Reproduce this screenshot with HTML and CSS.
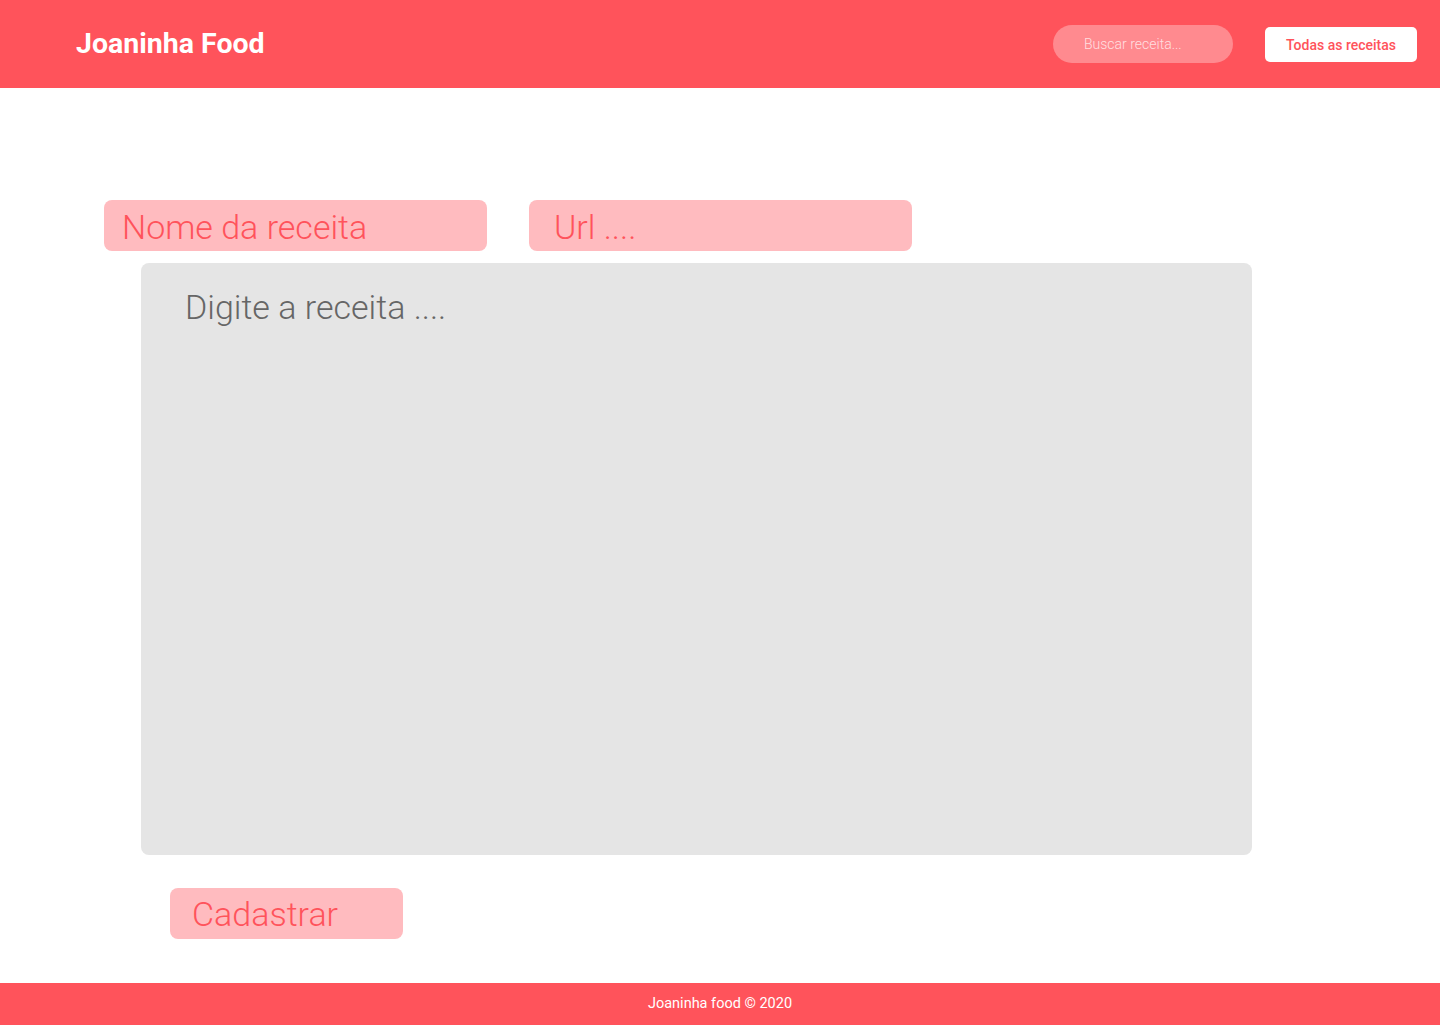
FILE: index.html
```html
<!DOCTYPE html>
<html lang="pt-BR">
<head>
<meta charset="utf-8">
<title>Joaninha Food</title>
<link rel="stylesheet" href="styles.css">
</head>
<body>
<div class="page">
  <header class="header">
    <h1 class="logo">Joaninha Food</h1>
    <div class="header-actions">
      <input class="search" type="text" placeholder="Buscar receita...">
      <button class="all-btn" type="button">Todas as receitas</button>
    </div>
  </header>
  <main class="main">
    <form class="form">
      <div class="row">
        <input class="field field-name" type="text" placeholder="Nome da receita">
        <input class="field field-url" type="text" placeholder="Url ....">
      </div>
      <textarea class="recipe" placeholder="Digite a receita ...."></textarea>
      <button class="submit" type="button">Cadastrar</button>
    </form>
  </main>
  <footer class="footer">Joaninha food © 2020</footer>
</div>
</body>
</html>
```
FILE: styles.css
```css
* { box-sizing: border-box; }
html, body { margin: 0; padding: 0; }
body {
  font-family: Roboto, "Liberation Sans", Arial, sans-serif;
  background: #fff;
}
.page {
  min-height: 1025px;
  display: flex;
  flex-direction: column;
}
.header {
  height: 88px;
  background: #ff535b;
  display: flex;
  align-items: center;
  justify-content: space-between;
  padding: 0 23px 0 76px;
}
.logo {
  margin: 0;
  color: #fff;
  font-size: 28.5px;
  font-weight: 700;
  line-height: 1;
  padding-top: 1px;
}
.header-actions {
  display: flex;
  align-items: center;
  gap: 32px;
}
.search {
  width: 180px;
  height: 38px;
  border: none;
  outline: none;
  border-radius: 19px;
  background: #ff8a8f;
  padding: 0 0 0 31px;
  font-family: inherit;
  font-size: 14px;
  font-weight: 300;
  color: #fff;
  margin-bottom: 1px;
}
.search::placeholder { color: #ffdfe0; opacity: 1; }
.all-btn {
  width: 152px;
  height: 35px;
  border: none;
  border-radius: 5px;
  background: #fff;
  color: #ff535b;
  font-family: inherit;
  font-size: 14px;
  font-weight: 500;
  padding: 0;
  margin-top: 1px;
}
.main {
  flex: 1;
  padding-top: 112px;
}
.form {
  display: flex;
  flex-direction: column;
  align-items: flex-start;
}
.row {
  display: flex;
  gap: 42px;
  margin-left: 104px;
}
.field {
  width: 383px;
  height: 51px;
  border: none;
  outline: none;
  border-radius: 8px;
  background: #ffbbbf;
  font-family: inherit;
  font-size: 34px;
  font-weight: 300;
  color: #ff535b;
  padding: 2px 0 0 18px;
}
.field-url { padding-left: 25px; }
.field::placeholder { color: #ff535b; opacity: 1; }
.recipe {
  display: block;
  margin: 12px 0 0 141px;
  width: 1111px;
  height: 592px;
  border: none;
  outline: none;
  resize: none;
  border-radius: 8px;
  background: #e5e5e5;
  font-family: inherit;
  font-size: 34px;
  font-weight: 300;
  color: #666;
  padding: 24px 44px;
}
.recipe::placeholder { color: #666; opacity: 1; }
.submit {
  margin: 33px 0 0 170px;
  width: 233px;
  height: 51px;
  border: none;
  border-radius: 8px;
  background: #ffbbbf;
  color: #ff535b;
  font-family: inherit;
  font-size: 34px;
  font-weight: 300;
  text-align: left;
  padding: 0 0 0 22px;
}
.footer {
  height: 42px;
  background: #ff535b;
  color: #fff;
  font-size: 14.5px;
  display: flex;
  align-items: center;
  justify-content: center;
  padding-bottom: 2px;
}
```
